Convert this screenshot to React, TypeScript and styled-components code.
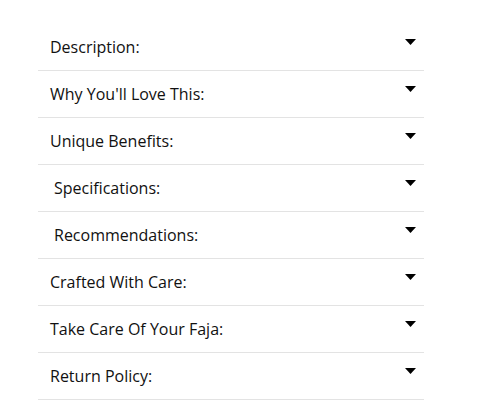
import React from "react";
import styled, { createGlobalStyle } from "styled-components";

const Global = createGlobalStyle`
  html, body { margin: 0; padding: 0; background: #fff; }
  body { font-family: "Open Sans", "Liberation Sans", sans-serif; }
`;

const Accordion = styled.div`
  margin: 24px 0 0 38px;
  width: 386px;
  display: flex;
  flex-direction: column;
`;

const Row = styled.div`
  display: flex;
  justify-content: space-between;
  align-items: flex-start;
  height: 46px;
  box-sizing: content-box;
  border-bottom: 1px solid #e3e3e3;
`;

const Title = styled.span<{ $indent?: boolean }>`
  margin-top: 12px;
  padding-left: ${(p) => (p.$indent ? 16 : 12)}px;
  font-size: 16px;
  line-height: 22px;
  color: #111;
  white-space: pre;
`;

const Arrow = styled.svg`
  margin-top: 15px;
  margin-right: 8px;
  width: 11px;
  height: 6px;
  display: block;
`;

const items: { label: string; indent?: boolean }[] = [
  { label: "Description:" },
  { label: "Why You'll Love This:" },
  { label: "Unique Benefits:" },
  { label: "Specifications:", indent: true },
  { label: "Recommendations:", indent: true },
  { label: "Crafted With Care:" },
  { label: "Take Care Of Your Faja:" },
  { label: "Return Policy:" },
];

export default function App() {
  return (
    <>
      <Global />
      <Accordion>
        {items.map((it) => (
          <Row key={it.label}>
            <Title $indent={it.indent}>{it.label}</Title>
            <Arrow viewBox="0 0 11 6">
              <polygon points="0,0 11,0 5.5,6" fill="#000" />
            </Arrow>
          </Row>
        ))}
      </Accordion>
    </>
  );
}
